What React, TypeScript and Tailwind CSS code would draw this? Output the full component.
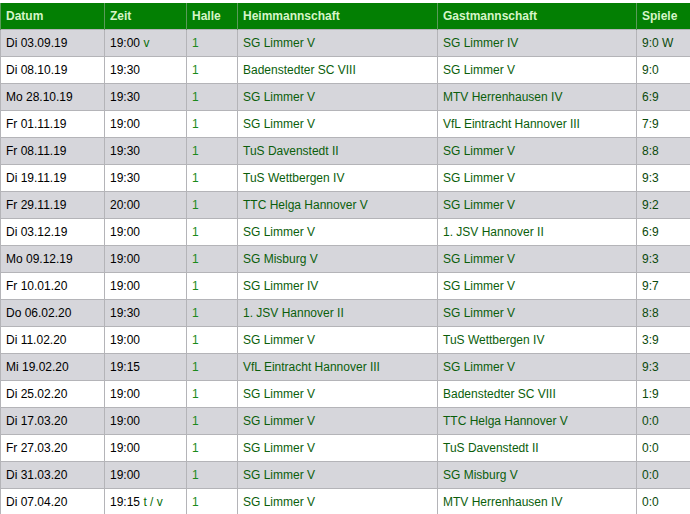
const games = [
  ["Di 03.09.19", "19:00", "v", "SG Limmer V", "SG Limmer IV", "9:0 W"],
  ["Di 08.10.19", "19:30", "", "Badenstedter SC VIII", "SG Limmer V", "9:0"],
  ["Mo 28.10.19", "19:30", "", "SG Limmer V", "MTV Herrenhausen IV", "6:9"],
  ["Fr 01.11.19", "19:00", "", "SG Limmer V", "VfL Eintracht Hannover III", "7:9"],
  ["Fr 08.11.19", "19:30", "", "TuS Davenstedt II", "SG Limmer V", "8:8"],
  ["Di 19.11.19", "19:30", "", "TuS Wettbergen IV", "SG Limmer V", "9:3"],
  ["Fr 29.11.19", "20:00", "", "TTC Helga Hannover V", "SG Limmer V", "9:2"],
  ["Di 03.12.19", "19:00", "", "SG Limmer V", "1. JSV Hannover II", "6:9"],
  ["Mo 09.12.19", "19:00", "", "SG Misburg V", "SG Limmer V", "9:3"],
  ["Fr 10.01.20", "19:00", "", "SG Limmer IV", "SG Limmer V", "9:7"],
  ["Do 06.02.20", "19:30", "", "1. JSV Hannover II", "SG Limmer V", "8:8"],
  ["Di 11.02.20", "19:00", "", "SG Limmer V", "TuS Wettbergen IV", "3:9"],
  ["Mi 19.02.20", "19:15", "", "VfL Eintracht Hannover III", "SG Limmer V", "9:3"],
  ["Di 25.02.20", "19:00", "", "SG Limmer V", "Badenstedter SC VIII", "1:9"],
  ["Di 17.03.20", "19:00", "", "SG Limmer V", "TTC Helga Hannover V", "0:0"],
  ["Fr 27.03.20", "19:00", "", "SG Limmer V", "TuS Davenstedt II", "0:0"],
  ["Di 31.03.20", "19:00", "", "SG Limmer V", "SG Misburg V", "0:0"],
  ["Di 07.04.20", "19:15", "t / v", "SG Limmer V", "MTV Herrenhausen IV", "0:0"],
];

const headers = ["Datum", "Zeit", "Halle", "Heimmannschaft", "Gastmannschaft", "Spiele"];
const widths = ["w-[104px]", "w-[82px]", "w-[51px]", "w-[200px]", "w-[199px]", "w-[60px]"];

export default function App() {
  return (
    <div className="w-[690px] h-[514px] overflow-hidden bg-white pt-[3px] font-['Liberation_Sans',Arial,sans-serif] text-[12px]">
      <table className="border-collapse table-fixed w-[696px]">
        <colgroup>
          {widths.map((w, i) => (
            <col key={i} className={w} />
          ))}
        </colgroup>
        <thead>
          <tr className="h-[26px] bg-[#037f03]">
            {headers.map((h) => (
              <th
                key={h}
                className="border-x border-[#5a9a5a] px-[5px] text-left font-bold text-[#d6f5c8]"
              >
                {h}
              </th>
            ))}
          </tr>
        </thead>
        <tbody>
          {games.map((g, i) => (
            <tr key={i} className={`h-[27px] ${i % 2 === 0 ? "bg-[#d6d6db]" : "bg-white"}`}>
              <td className="border border-[#b4b4b8] px-[5px] text-black">{g[0]}</td>
              <td className="border border-[#b4b4b8] px-[5px] text-black">
                {g[1]}
                {g[2] && <span className="text-[#0a6e0a]"> {g[2]}</span>}
              </td>
              <td className="border border-[#b4b4b8] px-[5px] text-[#1a8a1a]">1</td>
              <td className="border border-[#b4b4b8] px-[5px] text-[#0b5e0b]">{g[3]}</td>
              <td className="border border-[#b4b4b8] px-[5px] text-[#0b5e0b]">{g[4]}</td>
              <td className="border border-[#b4b4b8] px-[5px] text-[#0b4a0b]">{g[5]}</td>
            </tr>
          ))}
        </tbody>
      </table>
    </div>
  );
}
